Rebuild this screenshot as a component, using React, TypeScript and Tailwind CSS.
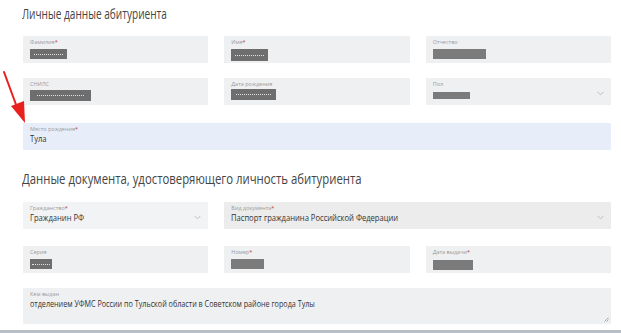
import React from "react";

type FieldProps = {
  label: string;
  required?: boolean;
  value?: string;
  mask?: { w: number; h?: number; top?: number; dots?: boolean; light?: boolean };
  select?: boolean;
  bg?: string;
  className?: string;
};

function Chevron() {
  return (
    <svg width="7" height="5" viewBox="0 0 7 5" className="absolute right-[7px] top-1/2 -translate-y-[20%]">
      <path d="M0.5 0.8 L3.5 3.8 L6.5 0.8" fill="none" stroke="#b5b5b5" strokeWidth="0.9" />
    </svg>
  );
}

function Field({ label, required, value, mask, select, bg = "bg-[#eff0f2]", className = "" }: FieldProps) {
  return (
    <div className={`relative h-[27px] pl-[7px] pt-[3px] ${bg} ${className}`}>
      <div className="text-[5.5px] leading-[7px] text-[#9a9a9a]">
        {label}
        {required && <span className="text-[#c0392b]">*</span>}
      </div>
      {value && (
        <div className="-mt-[1px] origin-left scale-x-[0.8] whitespace-nowrap text-[9.5px] leading-[13px] text-[#333]">
          {value}
        </div>
      )}
      {mask && (
        <div
          className={`flex items-center justify-center ${mask.light ? "bg-[#7b7b7b]" : "bg-[#6e6e6e]"}`}
          style={{ width: mask.w, height: mask.h ?? 10, marginTop: mask.top ?? 1 }}
        >
          {mask.dots && <div className="h-0 w-[78%] border-t border-dotted border-white/80" />}
        </div>
      )}
      {select && <Chevron />}
    </div>
  );
}

export default function App() {
  return (
    <div className="relative h-[333px] w-[621px] overflow-hidden bg-white font-['Open_Sans',sans-serif]">
      <div className="pl-[23px] pr-[10px]">
        <h1 className="-ml-[1px] origin-left scale-x-[0.72] whitespace-nowrap pt-[5px] text-[14px] leading-[18px] text-[#444]">
          Личные данные абитуриента
        </h1>

        <div className="mt-[13px] grid grid-cols-3 gap-x-[16px] gap-y-[15px]">
          <Field label="Фамилия" required mask={{ w: 37, dots: true, top: 3 }} />
          <Field label="Имя" required mask={{ w: 37, h: 12, dots: true, top: 3 }} />
          <Field label="Отчество" mask={{ w: 53, light: true, top: 3 }} />
          <Field label="СНИЛС" mask={{ w: 61, h: 11, dots: true, top: 2 }} />
          <Field label="Дата рождения" mask={{ w: 45, h: 11, dots: true, top: 1 }} />
          <Field label="Пол" select mask={{ w: 37, h: 7, light: true, top: 4 }} />
        </div>

        <Field label="Место рождения" required value="Тула" bg="bg-[#e8eef9]" className="mt-[18px] h-[26px]" />

        <h2 className="-ml-[1px] mt-[20px] origin-left scale-x-[0.81] whitespace-nowrap text-[14px] leading-[18px] text-[#444]">
          Данные документа, удостоверяющего личность абитуриента
        </h2>

        <div className="mt-[14px] grid grid-cols-3 gap-x-[16px] gap-y-[17px]">
          <Field label="Гражданство" required value="Гражданин РФ" select bg="bg-[#f2f3f4]" />
          <Field
            label="Вид документа"
            required
            value="Паспорт гражданина Российской Федерации"
            select
            bg="bg-[#ececec]"
            className="col-span-2"
          />
          <Field label="Серия" mask={{ w: 22, dots: true, top: 3 }} />
          <Field label="Номер" required mask={{ w: 33, light: true, top: 3 }} />
          <Field label="Дата выдачи" required mask={{ w: 40, light: true, top: 4 }} />
        </div>

        <div className="relative mt-[15px] h-[36px] bg-[#eff0f2] pl-[7px] pt-[3px]">
          <div className="text-[5.5px] leading-[7px] text-[#9a9a9a]">Кем выдан</div>
          <div className="-mt-[1px] origin-left scale-x-[0.8] whitespace-nowrap text-[9px] leading-[13px] text-[#333]">
            отделением УФМС России по Тульской области в Советском районе города Тулы
          </div>
          <svg width="5" height="5" viewBox="0 0 5 5" className="absolute bottom-[2px] right-[2px]">
            <path d="M4.5 0.5 L0.5 4.5 M4.5 2.5 L2.5 4.5" stroke="#9a9a9a" strokeWidth="0.8" />
          </svg>
        </div>
      </div>

      <div className="absolute bottom-0 left-0 h-[3px] w-full bg-[#b7bec6]" />

      <svg width="30" height="60" viewBox="0 0 30 60" className="absolute left-0 top-[68px]">
        <path d="M4 4 L18 42" stroke="#e8201e" strokeWidth="2" strokeLinecap="round" />
        <path d="M11 38 L25 55 L24 33 Z" fill="#e8201e" />
      </svg>
    </div>
  );
}
